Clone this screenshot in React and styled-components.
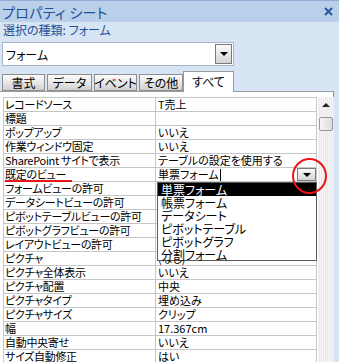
import styled, { createGlobalStyle } from "styled-components";

const GlobalStyle = createGlobalStyle`
  body {
    margin: 0;
    background: #d6e4f4;
    font-family: "Noto Sans CJK JP", "Liberation Sans", sans-serif;
    font-feature-settings: "palt";
  }
`;

const Window = styled.div`
  width: 339px;
  height: 362px;
  overflow: hidden;
  position: relative;
  background: #d6e4f4;
`;

const TitleBar = styled.div`
  height: 21px;
  border-top: 1px solid #8eaed8;
  background: #bad0ea;
  display: flex;
  align-items: center;
  justify-content: space-between;
  padding: 0 6px 0 2px;
  color: #1f4f97;
  font-size: 14px;
  letter-spacing: 0.3px;
`;

const Info = styled.div`
  height: 16px;
  padding-left: 3px;
  color: #1f4f97;
  font-size: 12px;
  line-height: 16px;
`;

const ComboWrap = styled.div`
  margin: 4px 0 0 2px;
  width: 226px;
  height: 22px;
  background: #fff;
  border: 1px solid #a5b4c6;
  display: flex;
  align-items: center;
  padding: 0 1px 0 3px;
  font-size: 12px;
`;

const ComboText = styled.span`
  flex: 1;
`;

const DropButton = styled.div`
  width: ${(p) => p.$w}px;
  height: ${(p) => p.$h}px;
  flex-shrink: 0;
  box-sizing: border-box;
  border: 1px solid #7a7a7a;
  background: linear-gradient(#fafafa, #d4d4d4);
  display: flex;
  align-items: center;
  justify-content: center;
`;

const Arrow = styled.span`
  width: 0;
  height: 0;
  border-left: 4px solid transparent;
  border-right: 4px solid transparent;
  border-top: 4px solid #000;
`;

const Tabs = styled.div`
  display: flex;
  align-items: flex-end;
  gap: 2px;
  height: 21px;
  margin-top: 4px;
  padding-left: 2px;
  position: relative;
  z-index: 1;
`;

const Tab = styled.div`
  width: ${(p) => p.$w}px;
  height: ${(p) => (p.$active ? 21 : 17)}px;
  box-sizing: border-box;
  border: 1px solid ${(p) => (p.$active ? "#9a9a9a" : "#8f8f8f")};
  border-bottom: ${(p) => (p.$active ? "none" : "1px solid #8f8f8f")};
  margin-left: ${(p) => (p.$active ? -2 : 0)}px;
  margin-bottom: ${(p) => (p.$active ? -1 : 0)}px;
  background: ${(p) => (p.$active ? "#fff" : "linear-gradient(#fbfbfb, #e6e6e6 55%, #cfcfcf)")};
  font-size: 12px;
  white-space: nowrap;
  color: #000;
  display: flex;
  align-items: center;
  justify-content: center;
  padding-bottom: ${(p) => (p.$active ? 2 : 0)}px;
`;

const Panel = styled.div`
  height: 280px;
  background: #fff;
  border-top: 1px solid #9a9a9a;
  border-right: 1px solid #8a8a8a;
  width: 334px;
  display: flex;
  padding-top: 5px;
  box-sizing: border-box;
`;

const Grid = styled.div`
  margin-left: 3px;
  width: 314px;
  border-top: 1px solid #c6c6c6;
  position: relative;
`;

const Row = styled.div`
  display: grid;
  grid-template-columns: 152px 161px;
  height: 14px;
  box-sizing: border-box;
  border-bottom: 1px solid #c6c6c6;
  border-left: 1px solid #c6c6c6;
  position: relative;
  font-size: 11px;
  line-height: 13px;
`;

const Cell = styled.div`
  border-right: 1px solid #c6c6c6;
  padding-left: ${(p) => (p.$value ? 2 : 1)}px;
  letter-spacing: ${(p) => (p.$value ? 0 : -0.3)}px;
  white-space: nowrap;
  display: flex;
  align-items: center;
  position: relative;
`;

const Caret = styled.span`
  width: 1px;
  height: 12px;
  background: #000;
  margin-left: 1px;
`;

const CellButton = styled(DropButton)`
  margin-left: auto;
  align-items: flex-end;
  padding-bottom: 3px;
`;

const Underlined = styled.span`
  position: relative;
  &::after {
    content: "";
    position: absolute;
    left: 0;
    bottom: -1px;
    width: 67px;
    height: 2px;
    background: #e8141c;
  }
`;

const Circle = styled.div`
  position: absolute;
  left: 288px;
  top: -10px;
  width: 35px;
  height: 36px;
  box-sizing: border-box;
  border: 2px solid #e8141c;
  border-radius: 50%;
  z-index: 3;
`;

const List = styled.div`
  position: absolute;
  left: 153px;
  top: 14px;
  width: 160px;
  height: 79px;
  box-sizing: border-box;
  background: #fff;
  border: 1px solid #5a5a5a;
  z-index: 2;
`;

const ListItem = styled.div`
  height: 13px;
  line-height: 13px;
  font-size: 12px;
  padding-left: 3px;
  background: ${(p) => (p.$selected ? "#000" : "transparent")};
  color: ${(p) => (p.$selected ? "#fff" : "#000")};
`;

const ScrollBar = styled.div`
  width: 16px;
  margin-left: 1px;
  background: repeating-linear-gradient(90deg, #f4f4f4 0 1px, #ebebeb 1px 2px);
  display: flex;
  flex-direction: column;
  align-items: center;
`;

const ScrollUp = styled.div`
  height: 16px;
  width: 16px;
  display: flex;
  align-items: center;
  justify-content: center;
  &::before {
    content: "";
    border-left: 4px solid transparent;
    border-right: 4px solid transparent;
    border-bottom: 4px solid #222;
  }
`;

const Thumb = styled.div`
  margin-top: 4px;
  width: 14px;
  height: 14px;
  box-sizing: border-box;
  border: 1px solid #9a9a9a;
  border-radius: 2px;
  background: linear-gradient(90deg, #f6f6f6, #dcdcdc);
`;

const rows = [
  ["レコードソース", "T売上"],
  ["標題", ""],
  ["ポップアップ", "いいえ"],
  ["作業ウィンドウ固定", "いいえ"],
  ["SharePoint サイトで表示", "テーブルの設定を使用する"],
  ["既定のビュー", "単票フォーム", "view"],
  ["フォームビューの許可", ""],
  ["データシートビューの許可", ""],
  ["ピボットテーブルビューの許可", ""],
  ["ピボットグラフビューの許可", ""],
  ["レイアウトビューの許可", ""],
  ["ピクチャ", "(なし)"],
  ["ピクチャ全体表示", "いいえ"],
  ["ピクチャ配置", "中央"],
  ["ピクチャタイプ", "埋め込み"],
  ["ピクチャサイズ", "クリップ"],
  ["幅", "17.367cm"],
  ["自動中央寄せ", "いいえ"],
  ["サイズ自動修正", "はい"],
];

const views = ["単票フォーム", "帳票フォーム", "データシート", "ピボットテーブル", "ピボットグラフ", "分割フォーム"];

const tabs = [
  ["書式", 43],
  ["データ", 45],
  ["イベント", 43],
  ["その他", 44],
  ["すべて", 51, true],
];

export default function App() {
  return (
    <Window>
      <GlobalStyle />
      <TitleBar>
        <span>プロパティ シート</span>
        <svg width="9" height="9" viewBox="0 0 9 9">
          <path d="M1 1 L8 8 M8 1 L1 8" stroke="#2457a8" strokeWidth="2" />
        </svg>
      </TitleBar>
      <Info>選択の種類: フォーム</Info>
      <ComboWrap>
        <ComboText>フォーム</ComboText>
        <DropButton $w={17} $h={20}>
          <Arrow />
        </DropButton>
      </ComboWrap>
      <Tabs>
        {tabs.map(([name, w, active]) => (
          <Tab key={name} $w={w} $active={active}>
            {name}
          </Tab>
        ))}
      </Tabs>
      <Panel>
        <Grid>
          {rows.map(([label, value, kind]) => (
            <Row key={label}>
              <Cell>{kind === "view" ? <Underlined>{label}</Underlined> : label}</Cell>
              <Cell $value>
                {value}
                {kind === "view" && (
                  <>
                    <Caret />
                    <CellButton $w={19} $h={13}>
                      <Arrow />
                    </CellButton>
                  </>
                )}
              </Cell>
              {kind === "view" && (
                <>
                  <Circle />
                  <List>
                    {views.map((v, i) => (
                      <ListItem key={v} $selected={i === 0}>
                        {v}
                      </ListItem>
                    ))}
                  </List>
                </>
              )}
            </Row>
          ))}
        </Grid>
        <ScrollBar>
          <ScrollUp />
          <Thumb />
        </ScrollBar>
      </Panel>
    </Window>
  );
}
